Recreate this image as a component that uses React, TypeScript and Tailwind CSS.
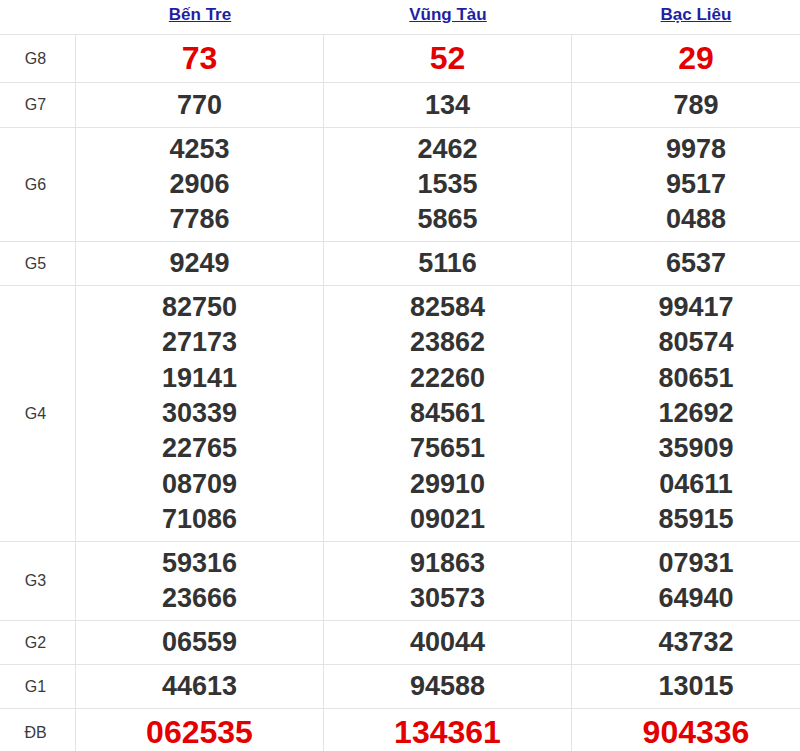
import React from "react"

type Prize = { label: string; values: string[][]; big?: boolean }

const provinces = ["Bến Tre", "Vũng Tàu", "Bạc Liêu"]

const prizes: Prize[] = [
  { label: "G8", values: [["73"], ["52"], ["29"]], big: true },
  { label: "G7", values: [["770"], ["134"], ["789"]] },
  {
    label: "G6",
    values: [
      ["4253", "2906", "7786"],
      ["2462", "1535", "5865"],
      ["9978", "9517", "0488"],
    ],
  },
  { label: "G5", values: [["9249"], ["5116"], ["6537"]] },
  {
    label: "G4",
    values: [
      ["82750", "27173", "19141", "30339", "22765", "08709", "71086"],
      ["82584", "23862", "22260", "84561", "75651", "29910", "09021"],
      ["99417", "80574", "80651", "12692", "35909", "04611", "85915"],
    ],
  },
  {
    label: "G3",
    values: [
      ["59316", "23666"],
      ["91863", "30573"],
      ["07931", "64940"],
    ],
  },
  { label: "G2", values: [["06559"], ["40044"], ["43732"]] },
  { label: "G1", values: [["44613"], ["94588"], ["13015"]] },
  { label: "ĐB", values: [["062535"], ["134361"], ["904336"]], big: true },
]

export default function App() {
  return (
    <div
      className="w-[800px] h-[751px] overflow-hidden bg-white"
      style={{ fontFamily: '"Liberation Sans", Arial, sans-serif' }}
    >
      <div className="grid w-[820px] grid-cols-[76px_248px_248px_248px]">
        <div className="h-[35px] border-b border-[#e3e3e3]" />
        {provinces.map((p) => (
          <div key={p} className="h-[35px] border-b border-[#e3e3e3] flex items-center justify-center">
            <a href="#" className="text-[17px] font-bold text-[#1f1fa3] underline leading-none -mt-[6px]">
              {p}
            </a>
          </div>
        ))}
        {prizes.map((row) => (
          <React.Fragment key={row.label}>
            <div className="border-b border-r border-[#e3e3e3] flex items-center justify-center text-[16px] text-[#3a3a3a]">
              <span className="-ml-[4px]">{row.label}</span>
            </div>
            {row.values.map((vals, i) => (
              <div
                key={i}
                className={
                  "border-b border-[#e3e3e3] py-1 text-center font-bold " +
                  (i < 2 ? "border-r " : "") +
                  (row.label === "G7" ? "pt-[5px] " : "")
                }
              >
                {vals.map((v) => (
                  <div
                    key={v}
                    className={
                      row.big
                        ? "text-[32px] leading-[39px] text-[#e30000]"
                        : row.label === "G4"
                          ? "text-[27px] leading-[35.33px] text-[#333]"
                          : "text-[27px] leading-[35px] text-[#333]"
                    }
                  >
                    {v}
                  </div>
                ))}
              </div>
            ))}
          </React.Fragment>
        ))}
      </div>
    </div>
  )
}
